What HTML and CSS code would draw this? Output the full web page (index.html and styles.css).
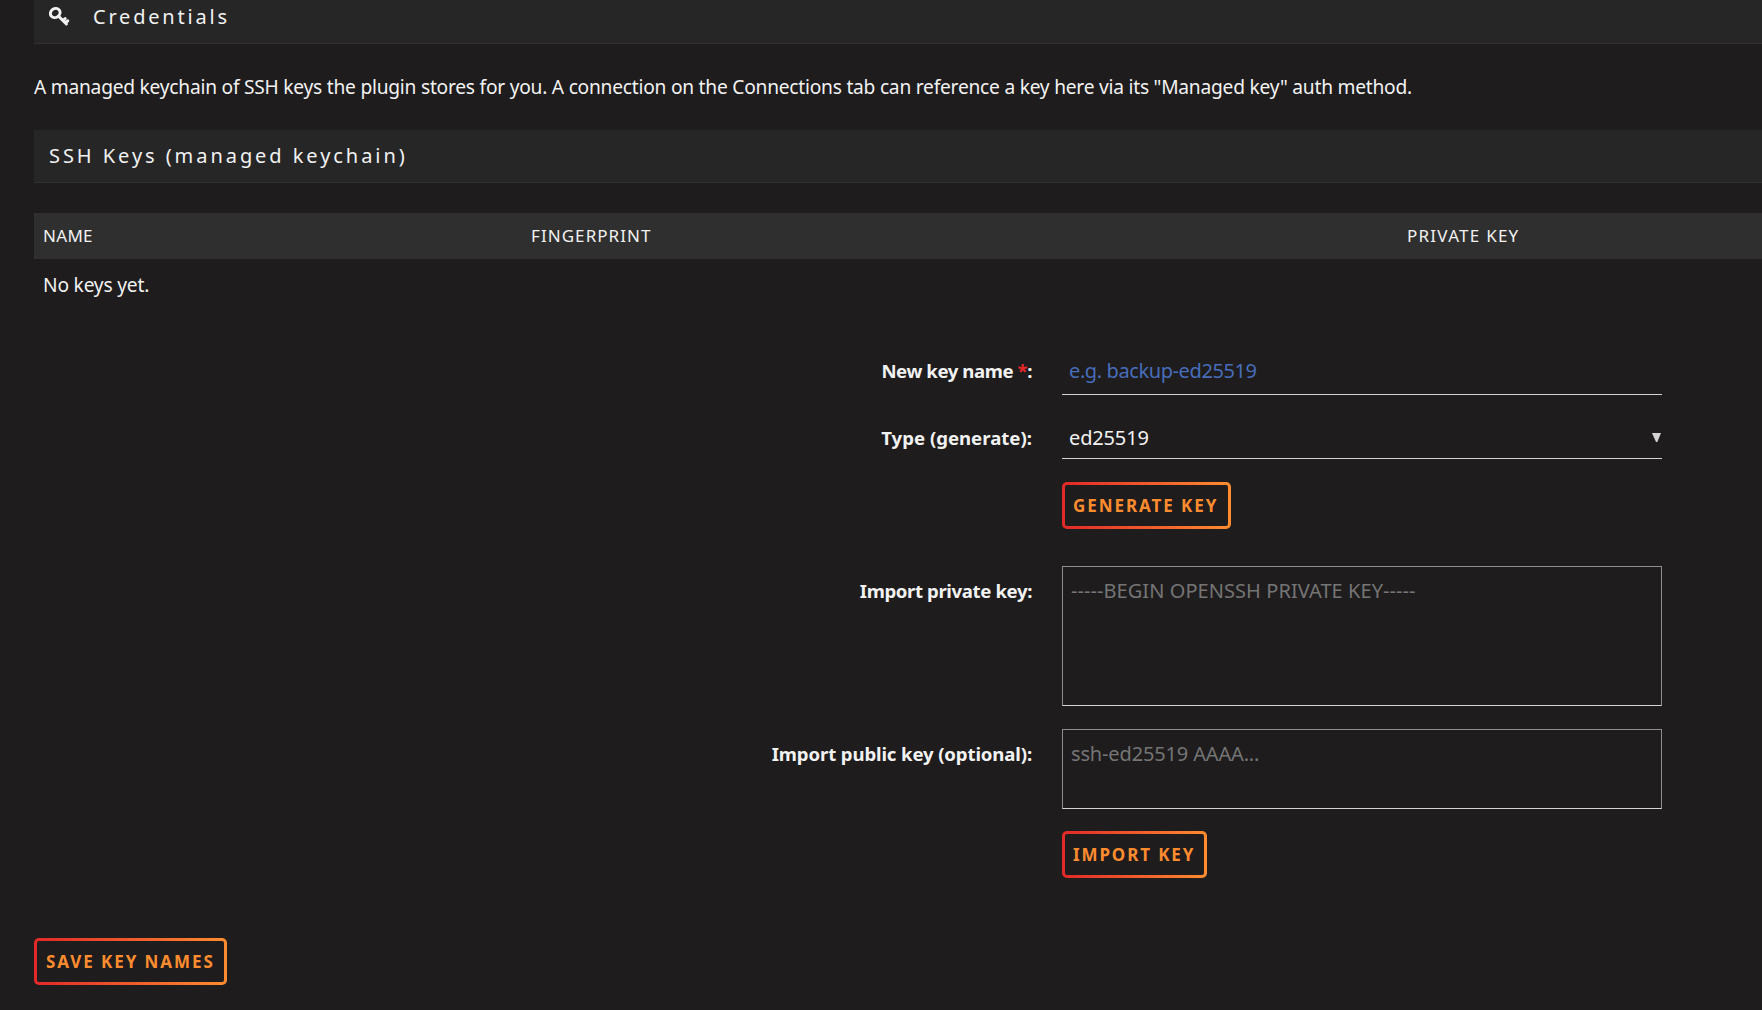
FILE: index.html
```html
<!DOCTYPE html>
<html lang="en">
<head>
<meta charset="utf-8">
<title>Credentials</title>
<link rel="stylesheet" href="styles.css">
</head>
<body>
<main class="page">
  <h1 class="title title-first">
    <svg class="key-icon" viewBox="0 0 22 22" aria-hidden="true">
      <ellipse cx="6.2" cy="8" rx="5" ry="4.4" transform="rotate(-35 6.2 8)" fill="none" stroke="currentColor" stroke-width="3"/>
      <path d="M9.6 11.2 17.4 19M14.2 15.6 16.2 13.6M16.6 18 18.8 15.8" fill="none" stroke="currentColor" stroke-width="3" stroke-linecap="round"/>
    </svg>
    <span>Credentials</span>
  </h1>
  <p class="intro">A managed keychain of SSH keys the plugin stores for you. A connection on the Connections tab can reference a key here via its "Managed key" auth method.</p>
  <h2 class="title title-keys">SSH Keys (managed keychain)</h2>

  <div class="keys">
    <div class="keys-head">
      <span>NAME</span><span class="head-print">FINGERPRINT</span><span class="head-private">PRIVATE KEY</span>
    </div>
    <div class="keys-empty">No keys yet.</div>
  </div>

  <form class="form">
    <div class="row row-name">
      <label class="label" for="name">New key name <span class="required">*</span>:</label>
      <input class="field input" id="name" placeholder="e.g. backup-ed25519">
    </div>
    <div class="row row-type">
      <label class="label" for="type">Type (generate):</label>
      <div class="select-wrap">
        <select class="field select" id="type"><option>ed25519</option></select>
        <svg class="arrow" viewBox="0 0 9 9" aria-hidden="true"><path d="M0 0H9L5.3 9H4Z" fill="#d4d4d4"/></svg>
      </div>
    </div>
    <div class="row row-generate">
      <span></span><button class="button button-generate" type="button">GENERATE KEY</button>
    </div>
    <div class="row row-private">
      <label class="label" for="private">Import private key:</label>
      <textarea class="field area area-private" id="private" placeholder="-----BEGIN OPENSSH PRIVATE KEY-----"></textarea>
    </div>
    <div class="row row-public">
      <label class="label" for="public">Import public key (optional):</label>
      <textarea class="field area area-public" id="public" placeholder="ssh-ed25519 AAAA..."></textarea>
    </div>
    <div class="row row-import">
      <span></span><button class="button button-import" type="button">IMPORT KEY</button>
    </div>
  </form>
  <button class="button button-save" type="button">SAVE KEY NAMES</button>
</main>
</body>
</html>
```
FILE: styles.css
```css
* { box-sizing: border-box; }

body {
  margin: 0;
  height: 1010px;
  overflow: hidden;
  background: #1e1c1d;
  color: #f2f2f2;
  font: 20px/24px "Noto Sans", "Liberation Sans", sans-serif;
}

.page { padding-left: 34px; }

.title {
  display: flex;
  margin: 0;
  padding: 14px 15px;
  background: #262626;
  border-bottom: 1px solid #313131;
  font-size: 20px;
  font-weight: 400;
  letter-spacing: 2.8px;
}

.title-first { height: 44px; padding-top: 5px; }
.title-keys { letter-spacing: 2.94px; }

.key-icon { width: 22px; height: 22px; margin-right: 22px; }

.intro {
  margin: 31px 0;
  font-size: 19.2px;
  letter-spacing: -0.24px;
  white-space: nowrap;
}

.keys { margin-top: 30px; }

.keys-head {
  display: grid;
  grid-template-columns: 488px 876px 1fr;
  padding: 13px 0 13px 9px;
  background: #2f2f2f;
  font-size: 17px;
  line-height: 20px;
  letter-spacing: 0.3px;
}

.head-print { letter-spacing: 1.06px; }
.head-private { letter-spacing: 1.25px; }

.keys-empty { padding: 14px 9px 0; font-size: 19.2px; letter-spacing: -0.2px; }

.form { margin-top: 48px; }

.row {
  display: grid;
  grid-template-columns: 998px 600px;
  column-gap: 30px;
  align-items: start;
}

.label {
  font-size: 18.6px;
  font-weight: 700;
  text-align: right;
}

.required { color: #e22828; }

.row-type, .row-public { margin-top: 23px; }
.row-name .label { padding-top: 14px; letter-spacing: -0.42px; }
.row-type .label { padding-top: 8px; }
.row-private .label { padding-top: 13px; letter-spacing: -0.38px; }
.row-public .label { padding-top: 13px; letter-spacing: -0.13px; }
.row-generate { margin-top: 23px; }
.row-private { margin-top: 37px; }
.row-import { margin-top: 22px; }

.field {
  display: block;
  width: 100%;
  margin: 0;
  border: 0;
  border-radius: 0;
  outline: 0;
  background: transparent;
  color: #f2f2f2;
  font: inherit;
}

.input {
  height: 50px;
  padding: 13px 7px 12px;
  border-bottom: 1px solid #d4d4d4;
  letter-spacing: -0.4px;
}

.input::placeholder { color: #486dba; }

.select-wrap { position: relative; }

.select {
  height: 41px;
  padding: 8px 7px;
  border-bottom: 1px solid #d4d4d4;
  appearance: none;
  letter-spacing: -0.15px;
}

.arrow {
  position: absolute;
  top: 15px;
  right: 1px;
  width: 9px;
  height: 9px;
}

.area {
  padding: 12px 8px;
  border: 1px solid #8f8d8e;
  border-bottom-color: #d4d4d4;
  resize: none;
}

.area::placeholder { color: #757575; }
.area-private { height: 140px; letter-spacing: 0.06px; }
.area-public { height: 80px; letter-spacing: -0.15px; }

.button {
  display: block;
  height: 47px;
  padding: 1px 0 0 8px;
  border: 3px solid transparent;
  border-radius: 5px;
  background:
    linear-gradient(#1e1c1d, #1e1c1d) padding-box,
    linear-gradient(90deg, #e22828, #ff8c2f) border-box;
  color: #ff8c2f;
  font: 700 17px/20px "Noto Sans", "Liberation Sans", sans-serif;
  text-align: left;
  white-space: nowrap;
}

.button-generate { width: 169px; letter-spacing: 1.93px; }
.button-import { width: 145px; letter-spacing: 1.88px; }
.button-save { width: 193px; margin-top: 60px; padding-left: 9px; letter-spacing: 1.92px; }
```
